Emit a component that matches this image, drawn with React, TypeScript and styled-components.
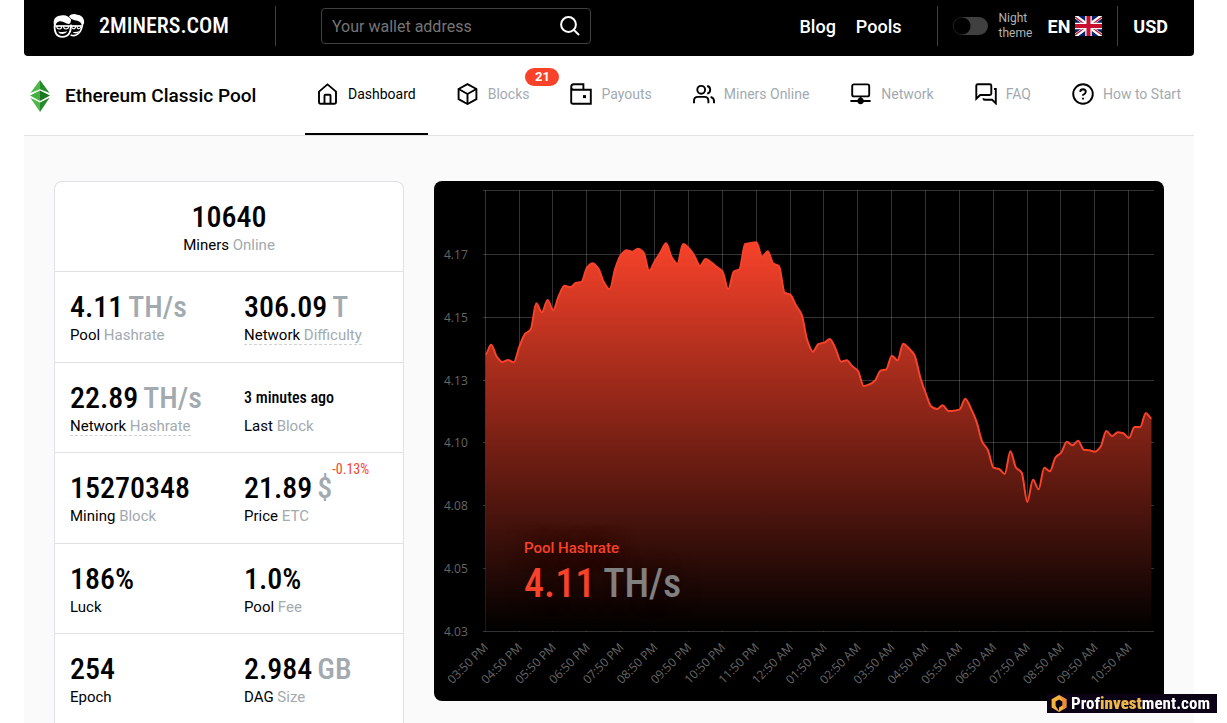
import React from "react";
import styled, { createGlobalStyle } from "styled-components";

const display = `"Roboto Condensed", "DejaVu Sans Condensed", sans-serif`;
const red = "#f8422a";
const muted = "#a2aab0";

const GlobalStyle = createGlobalStyle`
  *, *::before, *::after { box-sizing: border-box; }
  html { scrollbar-width: none; }
  body { margin: 0; background: #fff; color: #000; font-family: Roboto, sans-serif; }
  a { color: inherit; text-decoration: none; }
  button, input { font: inherit; }
`;

const Page = styled.div`
  margin: 0 33px 0 24px;
`;

/* Top bar */

const TopBar = styled.header`
  display: flex;
  align-items: center;
  height: 56px;
  padding: 0 26px 4px 29px;
  background: #000;
  color: #fff;
  border-radius: 0 0 4px 4px;
`;

const Brand = styled.a`
  display: flex;
  align-items: center;
  gap: 14px;
  width: 222px;
  font: 500 22px/40px ${display};
  white-space: nowrap;
`;

const Divider = styled.span<{ $before?: number; $after: number }>`
  width: 1px;
  height: 40px;
  margin-left: ${(p) => p.$before ?? 0}px;
  margin-right: ${(p) => p.$after}px;
  background: #404040;
`;

const SearchForm = styled.form`
  display: flex;
  align-items: center;
  width: 270px;
  height: 36px;
  padding: 0 10px;
  border: 1px solid #404040;
  border-radius: 4px;
`;

const SearchInput = styled.input`
  flex: 1;
  min-width: 0;
  padding: 0;
  border: 0;
  outline: 0;
  background: transparent;
  color: #fff;
  font-size: 16px;
  &::placeholder { color: #757575; opacity: 1; }
`;

const PlainButton = styled.button`
  display: flex;
  align-items: center;
  padding: 0;
  border: 0;
  background: none;
  color: inherit;
  cursor: pointer;
`;

const TextButton = styled(PlainButton)`
  gap: 5px;
  font-size: 18px;
  font-weight: 700;
`;

const TopLinks = styled.nav`
  display: flex;
  gap: 20px;
  margin: 0 35px 0 auto;
  font-size: 18px;
  font-weight: 500;
`;

const ThemeSwitch = styled.label`
  display: flex;
  align-items: center;
  gap: 11px;
  margin-right: 15px;
  color: #b4b4b4;
  font-size: 12px;
  line-height: 15px;
`;

const Toggle = styled.input`
  appearance: none;
  width: 35px;
  height: 18px;
  margin: 0;
  border-radius: 9px;
  background: radial-gradient(circle at 9px 9px, #000 8px, transparent 9px) #404040;
`;

const ThemeText = styled.span`
  width: 34px;
`;

/* Pool navigation */

const PoolBar = styled.div`
  display: flex;
  align-items: center;
  justify-content: space-between;
  height: 80px;
  padding-right: 1px;
  border-bottom: 1px solid #e2e2e2;
`;

const PoolTitle = styled.h1`
  display: flex;
  align-items: center;
  gap: 15px;
  margin: 0;
  padding-left: 6px;
  font-size: 19px;
  font-weight: 500;
  white-space: nowrap;
`;

const Tabs = styled.nav`
  display: flex;
  align-self: stretch;
  gap: 17px;
`;

const Tab = styled.a<{ $active?: boolean }>`
  position: relative;
  display: flex;
  align-items: center;
  gap: 9px;
  padding: 0 12px 2px;
  border-bottom: 2px solid ${(p) => (p.$active ? "#000" : "transparent")};
  color: ${(p) => (p.$active ? "#000" : muted)};
  font-size: 14px;
  white-space: nowrap;
  svg { color: #000; }
`;

const Badge = styled.span`
  position: absolute;
  top: 12px;
  right: -18px;
  width: 34px;
  border-radius: 9px;
  background: ${red};
  color: #fff;
  font-size: 13px;
  font-weight: 700;
  line-height: 18px;
  text-align: center;
`;

/* Dashboard */

const Main = styled.main`
  display: grid;
  grid-template-columns: 350px 1fr;
  align-items: start;
  gap: 30px;
  padding: 45px 30px 0;
  background: #fafafa;
`;

const StatCard = styled.section`
  display: grid;
  grid-auto-rows: 90px 91px;
  border: 1px solid #dfe1e4;
  border-bottom: 0;
  border-radius: 8px 8px 0 0;
  background: #fff;
`;

const StatRow = styled.div<{ $single?: boolean }>`
  display: grid;
  grid-template-columns: ${(p) => (p.$single ? "1fr" : "1fr 1fr")};
  padding-top: 16px;
  border-bottom: 1px solid #dfe1e4;
  text-align: ${(p) => (p.$single ? "center" : "left")};
  &:last-child { border-bottom: 0; }
`;

const Stat = styled.div<{ $single?: boolean }>`
  padding-left: ${(p) => (p.$single ? 0 : 15)}px;
`;

const StatValue = styled.div<{ $small?: boolean }>`
  display: flex;
  gap: 5px;
  width: fit-content;
  ${StatRow}:first-child & { margin: 0 auto; }
  font: 500 ${(p) => (p.$small ? 16 : 30)}px/37px ${display};
  white-space: nowrap;
`;

const Muted = styled.span`
  color: ${muted};
`;

const Delta = styled.sup`
  align-self: flex-start;
  margin: -7px 0 0 -5px;
  color: ${red};
  font-size: 14px;
  font-weight: 400;
  line-height: 1;
`;

const StatLabel = styled.span<{ $hint?: boolean }>`
  display: inline-block;
  height: 19px;
  border-bottom: 1px dashed ${(p) => (p.$hint ? "#cfd3d6" : "transparent")};
  font-size: 15px;
  line-height: 18px;
`;

const ChartPanel = styled.section`
  position: relative;
  overflow: hidden;
  border-radius: 8px;
  background: #000;
  svg { display: block; width: 100%; height: auto; }
`;

const ChartCaption = styled.div`
  position: absolute;
  left: 90px;
  bottom: 91px;
  color: ${red};
  text-shadow: 0 0 20px rgba(0, 0, 0, 0.5);
`;

const ChartCaptionTitle = styled.h2`
  margin: 0;
  font-size: 15px;
  font-weight: 500;
  line-height: 18px;
`;

const ChartCaptionValue = styled.div`
  display: flex;
  gap: 8px;
  font: 500 40px/53px ${display};
  span { color: #808080; }
`;

const Watermark = styled.div`
  position: fixed;
  right: 10px;
  bottom: 10px;
  display: flex;
  align-items: center;
  gap: 4px;
  width: 170px;
  height: 19px;
  padding-left: 4px;
  background: #0b0216;
  color: #fff;
  font: 700 17px/19px "Roboto Condensed", sans-serif;
  b { color: #f0b848; }
`;

/* Drawings */

const MinersLogo = () => (
  <svg width="32" height="24" viewBox="0 0 32 24" fill="none" stroke="#fff" aria-hidden="true">
    <path d="M1 11 C-0.5 6 3 1.6 8 1.6 C12 0.4 16 2 18 5.6 C18 8.4 17 9.8 16 10 C12 9.6 10 6.4 6 7.4 C4 8 3 9.4 2.6 11Z" fill="#fff" stroke="none" />
    <path d="M16 2.4 C18 -0.2 22 -0.4 24 0.8 C28 0.6 32 4.6 31 9.4 L29 12 C28.6 9 26 6.6 22.4 6.6 L18.4 5Z" fill="#fff" stroke="none" />
    <path d="M2 9.6 C0.6 17 3 22.8 9.4 22.8 C15.6 22.8 18.4 18 17.8 10.6" strokeWidth="1.8" />
    <path d="M17.6 21 C22 23 28 20.4 29.6 10.4" strokeWidth="1.6" />
    <path d="M2 12 H28.6" strokeWidth="1.4" />
    <path d="M3.6 12 H8.8 Q8.8 15 6.2 15 Q3.8 15 3.6 12Z M10.4 12 H15.8 Q15.6 15 13 15 Q10.6 15 10.4 12Z M18.6 12 H22.6 Q22.6 14.8 20.6 14.8 Q18.8 14.8 18.6 12Z M24 12 H28 Q27.6 14.8 25.8 14.8 Q24 14.8 24 12Z" strokeWidth="1.1" />
    <path d="M5 17.4 Q9.6 18.6 14.4 17.2 Q12.8 20 9.6 20 Q6.2 20 5 17.4Z" fill="#fff" stroke="none" />
    <path d="M19.4 17.8 Q23 18.4 26.4 17 Q25 19.6 22.8 19.6 Q20.6 19.6 19.4 17.8Z" fill="#fff" stroke="none" />
  </svg>
);

const SearchIcon = () => (
  <svg width="20" height="20" viewBox="0 0 20 20" fill="none" stroke="#fff" strokeWidth="2" aria-hidden="true">
    <circle cx="8.5" cy="8.5" r="7.4" />
    <path d="M13.6 13.6 L19 19" />
  </svg>
);

const Flag = () => (
  <svg width="27" height="20" viewBox="0 0 27 20" aria-hidden="true">
    <rect width="27" height="20" fill="#012169" />
    <path d="M0 0 L27 20 M27 0 L0 20" stroke="#fff" strokeWidth="4" />
    <path d="M0 1 L12 10 M27 19 L15 10 M27 1 L15 10 M0 19 L12 10" stroke="#c8102e" strokeWidth="1.4" />
    <path d="M13.5 0 V20 M0 10 H27" stroke="#fff" strokeWidth="6.5" />
    <path d="M13.5 0 V20 M0 10 H27" stroke="#c8102e" strokeWidth="4" />
  </svg>
);

const ClassicLogo = () => (
  <svg width="20" height="32" viewBox="0 0 20 32" aria-hidden="true">
    <path d="M10 0 L0.4 13 L10 9.2Z" fill="#4db848" />
    <path d="M10 0 L19.6 13 L10 9.2Z" fill="#278a2c" />
    <path d="M10 10.4 L0 15.4 L10 21Z" fill="#43b03f" />
    <path d="M10 10.4 L20 15.4 L10 21Z" fill="#1c7722" />
    <path d="M0.4 17.8 L10 22.4 V32Z" fill="#4db848" />
    <path d="M19.6 17.8 L10 22.4 V32Z" fill="#278a2c" />
  </svg>
);

const icons: Record<string, React.ReactNode> = {
  home: (
    <>
      <path d="M2 8.6 L10.5 1.4 L19 8.6 V19 Q19 20.8 17.2 20.8 H3.8 Q2 20.8 2 19Z" />
      <path d="M7.5 20.8 V12.6 Q7.5 11.8 8.3 11.8 H12.7 Q13.5 11.8 13.5 12.6 V20.8" />
    </>
  ),
  box: (
    <>
      <path d="M10.5 1.2 L19.4 6 V16.2 L10.5 21 L1.6 16.2 V6Z" />
      <path d="M1.6 6 L10.5 11 L19.4 6 M10.5 11 V21" />
    </>
  ),
  wallet: (
    <>
      <path d="M1.2 4 V19 Q1.2 20.8 3 20.8 H20.8 V6.8 H3.4 Q1.2 6.6 1.2 4 Q1.2 1.2 3.6 1.2 H13.4 V6.8" />
      <path d="M13 13.6 H16" strokeWidth="3" />
    </>
  ),
  users: (
    <>
      <circle cx="8.2" cy="6.8" r="3.9" />
      <path d="M1 20.2 V17.8 Q1 13.9 4.9 13.9 H11.5 Q15.4 13.9 15.4 17.8 V20.2 M14.2 3 Q17.2 3.6 17.2 6.8 Q17.2 10 14.2 10.6 M17.6 14 Q21 14.8 21 18 V20.2" />
    </>
  ),
  network: (
    <>
      <rect x="2.2" y="1.4" width="17" height="12" rx="1.6" />
      <path d="M10.6 13.4 V18 M0.4 18 H20.6" />
      <circle cx="10.6" cy="18" r="2.2" fill="currentColor" />
    </>
  ),
  chat: (
    <>
      <path d="M1.3 15.8 V2.8 Q1.3 1.3 2.8 1.3 H14.8 Q16.3 1.3 16.3 2.8 V10.6 Q16.3 12 14.8 12 H5.2Z" />
      <path d="M19 6 H20.8 V20.4 L17.2 16.8 H9.8 Q8.4 16.8 8.4 15.2" />
    </>
  ),
  help: (
    <>
      <circle cx="11" cy="11" r="9.8" />
      <path d="M8.2 8.8 Q8.4 6.3 11 6.3 Q13.8 6.4 13.8 8.8 Q13.8 10.6 11 12 V12.8 M11 14.8 V16.6" />
    </>
  ),
};

const TabIcon = ({ name }: { name: string }) => (
  <svg width="22" height="22" viewBox="0 0 22 22" fill="none" stroke="currentColor" strokeWidth="1.9" aria-hidden="true">
    {icons[name]}
  </svg>
);

const WatermarkLogo = () => (
  <svg width="16" height="17" viewBox="0 0 16 17" aria-hidden="true">
    <path d="M8 0 L15.4 4.2 V12.6 L8 17 L0.6 12.6 V4.2Z" fill="#f3b33d" />
    <path d="M8 0 L15.4 4.2 V12.6 L12 14.6 V6Z" fill="#f08a3c" />
    <path d="M8 4.4 L11.4 6.4 V10.4 L8 12.4 V16 L4.6 11 V6.4Z" fill="#0b0216" />
  </svg>
);

/* Chart */

const curve = [
  538, 509, 545, 561, 555, 562, 515, 477, 464, 385, 412, 375, 405, 362, 332, 337, 324, 321, 277, 265,
  281, 322, 343, 280, 240, 226, 230, 221, 232, 287, 259, 232, 205, 247, 266, 207, 219, 242, 273, 252,
  262, 276, 290, 343, 290, 283, 207, 204, 202, 245, 229, 266, 273, 353, 359, 391, 418, 495, 530, 507,
  503, 492, 520, 560, 556, 574, 588, 633, 628, 617, 587, 583, 542, 556, 506, 520, 540, 605, 655, 695,
  702, 691, 708, 707, 704, 671, 700, 740, 800, 825, 878, 882, 897, 829, 878, 893, 981, 914, 943, 878,
  889, 847, 833, 800, 811, 797, 824, 826, 830, 815, 768, 783, 772, 775, 789, 756, 756, 714, 730,
].map((v, i): [number, number] => [51.5 + i * 5.644, v / 3 - 6]);

/* Smooth path whose slope is flat at every local peak and trough. */
const smoothPath = (pts: [number, number][]) => {
  const slope = pts.map((p, i) => {
    if (i === 0 || i === pts.length - 1) return 0;
    const a = (p[1] - pts[i - 1][1]) / (p[0] - pts[i - 1][0]);
    const b = (pts[i + 1][1] - p[1]) / (pts[i + 1][0] - p[0]);
    return a * b <= 0 ? 0 : (2 * a * b) / (a + b);
  });
  return pts.slice(1).reduce((d, [x, y], i) => {
    const [px, py] = pts[i];
    const h = (x - px) / 3;
    return `${d} C${px + h} ${py + slope[i] * h} ${x - h} ${y - slope[i + 1] * h} ${x} ${y}`;
  }, `M${pts[0][0]} ${pts[0][1]}`);
};

const linePath = smoothPath(curve);

const levels: [number, string][] = [
  [9.5, ""], [73.5, "4.17"], [136.5, "4.15"], [199.5, "4.13"],
  [261.5, "4.10"], [324.5, "4.08"], [387.5, "4.05"], [450.5, "4.03"],
];

const hours = Array.from({ length: 20 }, (_, i) => {
  const h = (i + 3) % 24 + 12;
  const twelve = (h % 12) || 12;
  return `${String(twelve).padStart(2, "0")}:50 ${h < 24 ? "PM" : "AM"}`;
});

const HashrateChart = () => (
  <svg viewBox="0 0 730 520" role="img" aria-label="Pool hashrate over the last 20 hours">
    <defs>
      <linearGradient id="area" gradientUnits="userSpaceOnUse" x1="0" y1="61" x2="0" y2="450">
        <stop offset="0" stopColor={red} />
        <stop offset="1" stopColor="#000" />
      </linearGradient>
    </defs>
    <g stroke="#fff" strokeOpacity="0.2">
      {levels.map(([y]) => <path key={y} d={`M49 ${y} H720`} />)}
      {hours.map((h, i) => <path key={h} d={`M${Math.floor(51.2 + i * 33.87) + 0.5} 9.5 V450.5`} />)}
    </g>
    <path d={`${linePath} V450 H51.5 Z`} fill="url(#area)" />
    <path d={linePath} fill="none" stroke={red} strokeWidth="2" />
    <g fill="#666" fontFamily="Open Sans, sans-serif" fontSize="12">
      {levels.map(([y, text]) => text && <text key={text} x="10" y={y + 4}>{text}</text>)}
      {hours.map((h, i) => (
        <text key={h} textAnchor="end" transform={`translate(${55 + i * 33.87} 467) rotate(-45)`}>{h}</text>
      ))}
    </g>
  </svg>
);

/* Content */

const tabs = [
  { icon: "home", label: "Dashboard", active: true },
  { icon: "box", label: "Blocks", badge: "21" },
  { icon: "wallet", label: "Payouts" },
  { icon: "users", label: "Miners Online" },
  { icon: "network", label: "Network" },
  { icon: "chat", label: "FAQ" },
  { icon: "help", label: "How to Start" },
];

type StatData = {
  value: string; unit?: string; delta?: string; small?: boolean;
  label: string; sub?: string; hint?: boolean;
};

const rows: StatData[][] = [
  [{ value: "10640", label: "Miners", sub: "Online" }],
  [
    { value: "4.11", unit: "TH/s", label: "Pool", sub: "Hashrate" },
    { value: "306.09", unit: "T", label: "Network", sub: "Difficulty", hint: true },
  ],
  [
    { value: "22.89", unit: "TH/s", label: "Network", sub: "Hashrate", hint: true },
    { value: "3 minutes ago", small: true, label: "Last", sub: "Block" },
  ],
  [
    { value: "15270348", label: "Mining", sub: "Block" },
    { value: "21.89", unit: "$", delta: "-0.13%", label: "Price", sub: "ETC" },
  ],
  [{ value: "186%", label: "Luck" }, { value: "1.0%", label: "Pool", sub: "Fee" }],
  [{ value: "254", label: "Epoch" }, { value: "2.984", unit: "GB", label: "DAG", sub: "Size" }],
];

export default function App() {
  return (
    <>
      <GlobalStyle />
      <Page>
        <TopBar>
          <Brand href="#"><MinersLogo />2MINERS.COM</Brand>
          <Divider $after={45} />
          <SearchForm role="search">
            <SearchInput type="text" placeholder="Your wallet address" aria-label="Your wallet address" />
            <PlainButton type="submit" aria-label="Search"><SearchIcon /></PlainButton>
          </SearchForm>
          <TopLinks>
            <a href="#">Blog</a>
            <a href="#">Pools</a>
          </TopLinks>
          <Divider $after={15} />
          <ThemeSwitch>
            <Toggle type="checkbox" />
            <ThemeText>Night theme</ThemeText>
          </ThemeSwitch>
          <TextButton type="button">EN<Flag /></TextButton>
          <Divider $before={15} $after={15} />
          <TextButton type="button">USD</TextButton>
        </TopBar>
        <PoolBar>
          <PoolTitle><ClassicLogo />Ethereum Classic Pool</PoolTitle>
          <Tabs>
            {tabs.map((t) => (
              <Tab key={t.label} href="#" $active={t.active}>
                <TabIcon name={t.icon} />
                {t.label}
                {t.badge && <Badge>{t.badge}</Badge>}
              </Tab>
            ))}
          </Tabs>
        </PoolBar>
        <Main>
          <StatCard>
            {rows.map((row) => (
              <StatRow key={row[0].label + row[0].value} $single={row.length === 1}>
                {row.map((s) => (
                  <Stat key={s.value} $single={row.length === 1}>
                    <StatValue $small={s.small}>
                      {s.value}
                      {s.unit && <Muted>{s.unit}</Muted>}
                      {s.delta && <Delta>{s.delta}</Delta>}
                    </StatValue>
                    <StatLabel $hint={s.hint}>
                      {s.label} {s.sub && <Muted>{s.sub}</Muted>}
                    </StatLabel>
                  </Stat>
                ))}
              </StatRow>
            ))}
          </StatCard>
          <ChartPanel>
            <HashrateChart />
            <ChartCaption>
              <ChartCaptionTitle>Pool Hashrate</ChartCaptionTitle>
              <ChartCaptionValue>4.11 <span>TH/s</span></ChartCaptionValue>
            </ChartCaption>
          </ChartPanel>
        </Main>
      </Page>
      <Watermark>
        <WatermarkLogo />
        <span>Prof<b>invest</b>ment.com</span>
      </Watermark>
    </>
  );
}
